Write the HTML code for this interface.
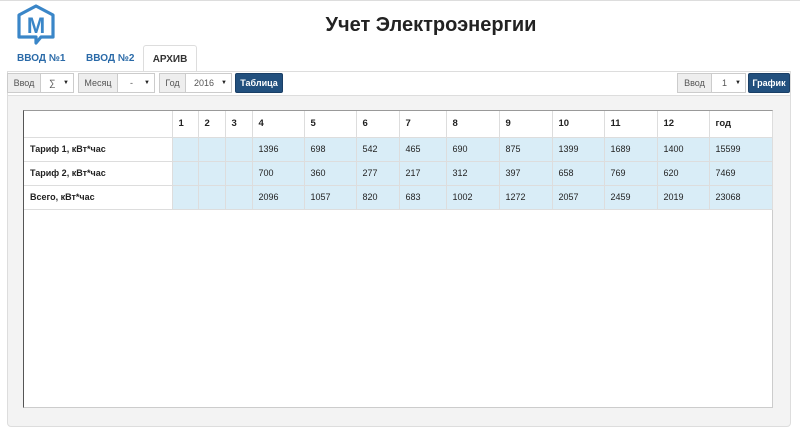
<!DOCTYPE html>
<html><head><meta charset="utf-8"><style>
*{box-sizing:border-box;margin:0;padding:0}
body{width:800px;height:436px;background:#fff;font-family:"Liberation Sans",Arial,sans-serif;position:relative;overflow:hidden;border-top:1px solid #ddd}
.abs{position:absolute}
h1{position:absolute;left:0;width:862px;text-align:center;top:13px;font-size:20px;font-weight:bold;color:#222}
.tab{position:absolute;top:44px;height:27px;font-size:10px;font-weight:bold;color:#2a6aa8;line-height:27px}
.tab.act{border:1px solid #ddd;border-bottom:none;background:#fff;color:#333;text-align:center;border-radius:3px 3px 0 0}
.bar{position:absolute;left:7px;top:70px;width:784px;height:24px;border:1px solid #ddd;border-bottom:none;background:#fff}
.ad{position:absolute;top:72px;height:20px;border:1px solid #ccc;background:#eee;font-size:9px;color:#555;line-height:18px;text-align:center}
.sel{position:absolute;top:72px;height:20px;border:1px solid #ccc;background:#fff;font-size:9px;color:#555;line-height:18px;padding-left:8px}
.sel:after{content:"▼";position:absolute;right:4px;font-size:6px;color:#222}
.btn{position:absolute;top:72px;height:20px;background:#22507e;border:1px solid #1a3f66;border-radius:2px;color:#fff;font-size:9px;font-weight:bold;line-height:18px;text-align:center}
.panel{position:absolute;left:7px;top:94px;width:784px;height:332px;background:#f3f3f3;border:1px solid #ddd;border-radius:0 0 4px 4px}
.box{position:absolute;left:23px;top:109px;width:750px;height:298px;background:#fff;border:1px solid #ccc;border-left:1px solid #555;border-top:1px solid #999}
table{position:absolute;left:24px;top:110px;border-collapse:collapse;font-size:9px;color:#222}
td{border:1px solid #ddd;padding:0 6px;height:24px}
tr:first-child td{font-weight:bold;height:26px;font-size:9.5px;border-top:none}
td.l{font-weight:bold}
td.b{background:#d9edf7}
tr td:first-child{border-left:none}
</style></head><body>
<svg class="abs" style="left:16px;top:2px" width="40" height="42" viewBox="0 0 40 42"><path d="M3 12 L20 3 L37 12 L37 34 L25 34 L20 40 L20 34 L3 34 Z" fill="none" stroke="#3a86c8" stroke-width="3.2" stroke-linejoin="round"/><text x="20" y="30" text-anchor="middle" font-family="Liberation Sans" font-weight="bold" font-size="22" fill="#3a86c8">M</text></svg>
<h1>Учет Электроэнергии</h1>
<div class="tab" style="left:17px">ВВОД №1</div>
<div class="tab" style="left:86px">ВВОД №2</div>
<div class="tab act" style="left:143px;width:54px">АРХИВ</div>
<div class="bar"></div>
<div class="ad" style="left:7px;width:34px">Ввод</div><div class="sel" style="left:40px;width:34px">∑</div>
<div class="ad" style="left:78px;width:40px">Месяц</div><div class="sel" style="left:117px;width:38px;padding-left:12px">-</div>
<div class="ad" style="left:159px;width:27px">Год</div><div class="sel" style="left:185px;width:47px">2016</div>
<div class="btn" style="left:235px;width:48px">Таблица</div>
<div class="ad" style="left:677px;width:35px">Ввод</div><div class="sel" style="left:711px;width:35px;padding-left:10px">1</div>
<div class="btn" style="left:748px;width:42px">График</div>
<div class="panel"></div>
<div class="box"></div>
<table>
<tr><td style="width:148px"></td><td style="width:26px">1</td><td style="width:27px">2</td><td style="width:27px">3</td><td style="width:52px">4</td><td style="width:52px">5</td><td style="width:43px">6</td><td style="width:47px">7</td><td style="width:53px">8</td><td style="width:53px">9</td><td style="width:52px">10</td><td style="width:53px">11</td><td style="width:52px">12</td><td style="width:63px">год</td></tr>
<tr><td class="l">Тариф 1, кВт*час</td><td class="b"></td><td class="b"></td><td class="b"></td><td class="b">1396</td><td class="b">698</td><td class="b">542</td><td class="b">465</td><td class="b">690</td><td class="b">875</td><td class="b">1399</td><td class="b">1689</td><td class="b">1400</td><td class="b">15599</td></tr>
<tr><td class="l">Тариф 2, кВт*час</td><td class="b"></td><td class="b"></td><td class="b"></td><td class="b">700</td><td class="b">360</td><td class="b">277</td><td class="b">217</td><td class="b">312</td><td class="b">397</td><td class="b">658</td><td class="b">769</td><td class="b">620</td><td class="b">7469</td></tr>
<tr><td class="l">Всего, кВт*час</td><td class="b"></td><td class="b"></td><td class="b"></td><td class="b">2096</td><td class="b">1057</td><td class="b">820</td><td class="b">683</td><td class="b">1002</td><td class="b">1272</td><td class="b">2057</td><td class="b">2459</td><td class="b">2019</td><td class="b">23068</td></tr>
</table>
</body></html>
